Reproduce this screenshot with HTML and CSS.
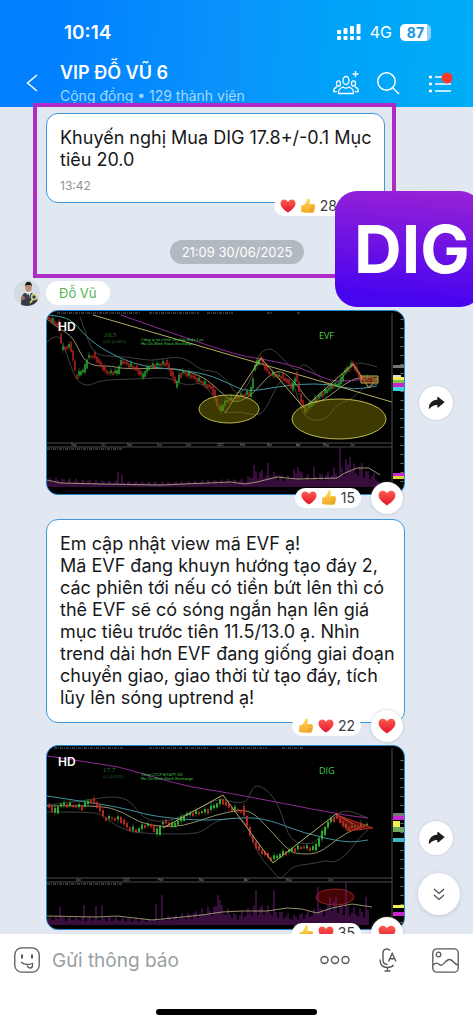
FILE: index.html
```html
<!DOCTYPE html>
<html lang="vi">
<head>
    <meta charset="UTF-8">
    <meta name="viewport" content="width=device-width, initial-scale=1.0">
    <title>VIP ĐỖ VŨ 6</title>
    <link rel="stylesheet" href="styles.css">
</head>
<body>
    <!-- shared icons -->
    <svg class="sprite" aria-hidden="true">
        <defs>
            <linearGradient id="heart-fill" x1="0" y1="0" x2="0" y2="1">
                <stop offset="0" stop-color="#ff5b4f"/>
                <stop offset="1" stop-color="#e0142b"/>
            </linearGradient>
            <linearGradient id="thumb-fill" x1="0" y1="0" x2="0" y2="1">
                <stop offset="0" stop-color="#ffdc55"/>
                <stop offset="1" stop-color="#f3a827"/>
            </linearGradient>
            <symbol id="heart" viewBox="0 0 16 16">
                <path fill="url(#heart-fill)" d="M8 14.6C5.4 12.7.5 9.4.5 5.5.5 3.2 2.2 1.6 4.3 1.6 6 1.6 7.3 2.5 8 4c.7-1.5 2-2.4 3.7-2.4 2.1 0 3.8 1.6 3.8 3.9 0 3.9-4.9 7.2-7.5 9.1z"/>
            </symbol>
            <symbol id="thumb" viewBox="0 0 16 16">
                <path fill="url(#thumb-fill)" d="M1.2 7.6c1.6-.2 3-.6 4-2.1C6.300 3.800 7.200 2.800 7.200 1.500 7.300.2 9.300 0 9.800 1.600c.4 1.400 0 2.800-.6 4.300h4.500c1.500 0 1.800 1.800.8 2.300 1.100.5.9 2.100-.1 2.400.7.6.4 2-.5 2.200.4.900-.2 2-1.200 2H6.500c-1.600 0-2.600-.5-3.500-.5H1.200z"/>
                <path fill="none" stroke="#d98a1c" stroke-width=".6" d="M10.200 8.300h4M10.200 10.600h3.900M10.200 12.800h3.400"/>
            </symbol>
            <symbol id="share" viewBox="0 0 16 16">
                <path fill="#1c1c1e" stroke="#1c1c1e" stroke-linejoin="round" d="M9.300 3.200 15 7.600l-5.700 4.600V9.800C5.700 9.500 3.300 10.800 1.200 13.400 1.500 8.800 4.400 5.900 9.300 5.600z"/>
            </symbol>
        </defs>
    </svg>

    <header class="header">
        <div class="status-bar">
            <span class="time">10:14</span>
            <div class="status-right">
                <svg width="25" height="17" viewBox="0 0 25 17" fill="#fff">
                    <rect x="0" y="6" width="4" height="4" rx="1"/><rect x="0" y="12" width="4" height="4" rx="1"/>
                    <rect x="6.500" y="4" width="4" height="6" rx="1"/><rect x="6.500" y="12" width="4" height="4" rx="1"/>
                    <rect x="13" y="2" width="4" height="8" rx="1"/><rect x="13" y="12" width="4" height="4" rx="1"/>
                    <rect x="19.500" y="0" width="4" height="10" rx="1"/><rect x="19.500" y="12" width="4" height="4" rx="1"/>
                </svg>
                <span class="network">4G</span>
                <span class="battery">87</span>
            </div>
        </div>
        <div class="title-bar">
            <button class="icon-btn back" aria-label="Quay lại">
                <svg width="12" height="18" viewBox="0 0 12 18" fill="none" stroke="#fff" stroke-width="1.5"><path d="M11 1 1.500 9 11 17"/></svg>
            </button>
            <div class="titles">
                <h1>VIP ĐỖ VŨ 6</h1>
                <p>Cộng đồng • 129 thành viên</p>
            </div>
            <div class="actions">
                <button class="icon-btn" aria-label="Thêm thành viên">
                    <svg width="26" height="24" viewBox="0 0 26 24" fill="none" stroke="#fff" stroke-width="1.3">
                        <ellipse cx="13" cy="9.5" rx="3" ry="4"/>
                        <ellipse cx="5.5" cy="12.5" rx="2" ry="2.7"/>
                        <ellipse cx="20.5" cy="12.5" rx="2" ry="2.7"/>
                        <path d="M5.5 22.500c-.4-4 1.500-5.500 4.500-6.500 2 1.400 4 1.400 6 0 3 1 4.900 2.500 4.500 6.500z"/>
                        <path d="M4 16c-2.500.6-3.300 2-3.300 4.700H4M22 16c2.500.6 3.300 2 3.300 4.700H22M22.500 0v6M19.500 3h6"/>
                    </svg>
                </button>
                <button class="icon-btn" aria-label="Tìm kiếm">
                    <svg width="23" height="23" viewBox="0 0 23 23" fill="none" stroke="#fff" stroke-width="1.5"><circle cx="9.5" cy="9.5" r="8.7"/><path d="m16 16 6 6"/></svg>
                </button>
                <button class="icon-btn menu" aria-label="Tùy chọn">
                    <svg width="25" height="22" viewBox="0 0 25 22" fill="none" stroke="#fff" stroke-width="1.5">
                        <path d="M1 5h3M1 12h3M1 19h3" stroke-width="2.5"/><path d="M7 5h11M7 12h16M7 19h16"/>
                        <circle cx="19" cy="6" r="5.5" fill="#f9382d" stroke="none"/>
                    </svg>
                </button>
            </div>
        </div>
    </header>

    <main class="chat">
        <section class="highlighted">
            <div class="bubble first">
                <p>Khuyến nghị Mua DIG 17.8+/-0.1 Mục<br>tiêu 20.0</p>
                <time>13:42</time>
                <div class="reactions">
                    <span class="pill">
                        <svg width="16" height="16"><use href="#heart"/></svg>
                        <svg width="16" height="16"><use href="#thumb"/></svg>
                        <span>28</span>
                    </span>
                </div>
            </div>
            <div class="date"><span>21:09 30/06/2025</span></div>
        </section>

        <div class="sender">
            <svg class="avatar" width="26" height="26" viewBox="0 0 26 26">
                <defs><clipPath id="round"><circle cx="13" cy="13" r="13"/></clipPath></defs>
                <g clip-path="url(#round)">
                    <path fill="#d5dce1" d="M0 0h26v26H0z"/>
                    <path fill="#363c45" d="M7 26c0-8 1-12 4-13l6 0c4 1 7 5 8 13z"/>
                    <path fill="#eee" d="m12 12 2.500 8L17 12z"/>
                    <path fill="#233a68" d="m14 13-1 3 1.500 5 1-5z"/>
                    <ellipse cx="14.5" cy="7.5" rx="3.2" ry="4.3" fill="#bd8b72"/>
                    <path fill="#17191d" d="M11 7c-.6-7 7.500-7 7 0l-1-2h-5z"/>
                    <path fill="none" stroke="#dbd383" stroke-width="1.5" d="m16 23 3-4"/>
                    <circle cx="20" cy="17" r="2.5" fill="none" stroke="#dbd383" stroke-width="1.5"/>
                    <circle cx="9" cy="18" r="2" fill="#9b705f"/>
                </g>
            </svg>
            <span class="name">Đỗ Vũ</span>
        </div>

        <div class="row">
            <figure class="photo">
                <svg class="chart" viewBox="0 0 357 183" data-chart="evf">
                    <path class="strip" d="M10 2h84M102 2h50M160 2h26M220 2h5M250 2h4"/>
                    <g class="indicators"></g>
                    <path class="yellow" d="m46 4 299 87"/>
                    <g class="candles"></g>
                    <path class="yellow" d="m178 102 36-55 43 50 49-44 16 24 8-10"/>
                    <path class="bright" d="M314 65h17v7h-17z" fill="#aa422080"/>
                    <ellipse class="zone" cx="182" cy="98" rx="30" ry="14"/>
                    <ellipse class="zone" cx="292" cy="108" rx="47" ry="20"/>
                    <path class="axis" d="M0 132h345M0 136h345M345 2v181"/>
                    <path class="strip" d="M0 138h76"/>
                    <g class="volume"></g>
                    <path class="cream" d="m0 169 14 3 40 1 60 1 70-3 14 2 12-2 20-5 20 2 40-1 8-5 12-5h12l11 7"/>
                    <g class="axis-text">
                        <text x="24" y="135">Sep</text><text x="54" y="135">Oct</text><text x="80" y="135">Nov</text><text x="110" y="135">Dec</text><text x="139" y="135">Dec</text><text x="170" y="135">2025</text><text x="193" y="135">Feb</text><text x="220" y="135">Mar</text><text x="249" y="135">Apr</text><text x="276" y="135">May</text><text x="303" y="135">Jun</text>
                    </g>
                    <path class="ticks" d="M355 8v172"/>
                    <path fill="#777" d="M346 54h11v3h-11z"/><path fill="#ddd" d="M346 64h8v2h-8z"/><path fill="#f1ef52" d="M346 66h11v3h-11z"/><path fill="#7fc04f" d="M346 69h11v3h-11z"/><path fill="#c927cb" d="M346 72h11v4h-11zM346 162h11v3h-11z"/><path fill="#3bd4df" d="M346 76h11v4h-11z"/><path fill="#e1d13a" d="M346 165h11v3h-11z"/>
                    <text class="price" x="57" y="26">10.5</text>
                    <text class="tiny dim" x="56" y="32">0.05 (0.48%)</text>
                    <text class="tiny" x="94" y="30">Công ty tài chính cổ phần Điện Lực</text>
                    <text class="tiny" x="94" y="34">Ho Chi Minh Stock Exchange</text>
                    <text class="ticker" x="272" y="28">EVF</text>
                    <text class="hd" x="11" y="20">HD</text>
                </svg>
                <div class="reactions">
                    <span class="pill">
                        <svg width="16" height="16"><use href="#heart"/></svg>
                        <svg width="16" height="16"><use href="#thumb"/></svg>
                        <span>15</span>
                    </span>
                    <button class="react" aria-label="Thả tim"><svg width="18" height="18"><use href="#heart"/></svg></button>
                </div>
            </figure>
            <button class="round-btn" aria-label="Chia sẻ"><svg width="17" height="17"><use href="#share"/></svg></button>
        </div>

        <div class="row">
            <div class="bubble">
                <p>Em cập nhật view mã EVF ạ!<br>Mã EVF đang khuyn hướng tạo đáy 2,<br>các phiên tới nếu có tiền bứt lên thì có<br>thê EVF sẽ có sóng ngắn hạn lên giá<br>mục tiêu trước tiên 11.5/13.0 ạ. Nhìn<br>trend dài hơn EVF đang giống giai đoạn<br>chuyển giao, giao thời từ tạo đáy, tích<br>lũy lên sóng uptrend ạ!</p>
                <div class="reactions">
                    <span class="pill">
                        <svg width="16" height="16"><use href="#thumb"/></svg>
                        <svg width="16" height="16"><use href="#heart"/></svg>
                        <span>22</span>
                    </span>
                    <button class="react" aria-label="Thả tim"><svg width="18" height="18"><use href="#heart"/></svg></button>
                </div>
            </div>
        </div>

        <div class="row">
            <figure class="photo">
                <svg class="chart" viewBox="0 0 357 183" data-chart="dig">
                    <path class="strip" d="M7 2h70M102 2h34M138 2h24M170 2h50M235 2h22"/>
                    <g class="indicators"></g>
                    <g class="candles"></g>
                    <path class="yellow" d="m116 82 60-33 50 68 63-49 17 10"/>
                    <path fill="#bf171790" stroke="#a93022" d="m290 69 36 13-25 3z"/>
                    <ellipse class="danger" cx="288" cy="151" rx="19" ry="8"/>
                    <path class="axis" d="M0 132h345M0 136h345M345 2v181"/>
                    <path class="strip" d="M0 138h76"/>
                    <g class="volume"></g>
                    <path class="cream" d="m0 170 50 1 20-1 35 4 50-5 20-3 20-1 25 0 20-3 15 1 15 4 15-5 20-4 20 3"/>
                    <g class="axis-text">
                        <text x="29" y="135">Dec</text><text x="76" y="135">2025</text><text x="111" y="135">Feb</text><text x="152" y="135">Mar</text><text x="197" y="135">Apr</text><text x="239" y="135">May</text><text x="281" y="135">Jun</text>
                    </g>
                    <path class="ticks" d="M355 14v166"/>
                    <path fill="#777" d="M346 67h11v3h-11z"/><path fill="#c927cb" d="M346 70h11v4h-11zM346 166h11v4h-11z"/><path fill="#f1ef52" d="M346 75h7v6h-7zM346 159h11v3h-11z"/><path fill="#6da75b" d="M346 81h11v5h-11z"/><path fill="#39bac6" d="M346 92h11v4h-11z"/>
                    <text class="price" x="56" y="26">17.7</text>
                    <text class="tiny dim" x="56" y="32">0.1 (0.57%)</text>
                    <text class="tiny" x="94" y="30">Tổng CTCP ĐT&amp;PT XD</text>
                    <text class="tiny" x="94" y="34">Ho Chi Minh Stock Exchange</text>
                    <text class="ticker" x="272" y="28">DIG</text>
                    <text class="hd" x="11" y="20">HD</text>
                </svg>
                <div class="reactions">
                    <span class="pill">
                        <svg width="16" height="16"><use href="#thumb"/></svg>
                        <svg width="16" height="16"><use href="#heart"/></svg>
                        <span>35</span>
                    </span>
                    <button class="react" aria-label="Thả tim"><svg width="18" height="18"><use href="#heart"/></svg></button>
                </div>
            </figure>
            <button class="round-btn" aria-label="Chia sẻ"><svg width="17" height="17"><use href="#share"/></svg></button>
        </div>

        <button class="scroll-down" aria-label="Xuống cuối">
            <svg width="12" height="13" viewBox="0 0 12 13" fill="none" stroke="#4d4d4d" stroke-width="1.2"><path d="m1 1 5 4.500L11 1M1 7l5 4.500L11 7"/></svg>
        </button>
    </main>

    <footer class="composer">
        <div class="input-row">
            <button class="icon-btn" aria-label="Nhãn dán">
                <svg width="26" height="26" viewBox="0 0 26 26" fill="none" stroke="#55585c" stroke-width="1.3">
                    <rect x=".8" y=".8" width="24.4" height="24.4" rx="7"/>
                    <path d="M8 7.500v4M18 7.500v4" stroke-width="2"/>
                    <path d="M7 15c3 3 7 3 11.500 1.500v2.500c-.6 3-5 2.500-5-.8"/>
                </svg>
            </button>
            <input type="text" placeholder="Gửi thông báo" aria-label="Gửi thông báo">
            <button class="icon-btn" aria-label="Thêm">
                <svg width="30" height="10" viewBox="0 0 30 10" fill="none" stroke="#55585c" stroke-width="1.4"><circle cx="4.5" cy="5" r="3.5"/><circle cx="15" cy="5" r="3.5"/><circle cx="25.5" cy="5" r="3.5"/></svg>
            </button>
            <button class="icon-btn mic" aria-label="Giọng nói">
                <svg width="18" height="24" viewBox="0 0 18 24" fill="none" stroke="#55585c" stroke-width="1.4">
                    <path d="M11 2.500C9-.1 4 .6 4 5v7c0 3 2 4.500 4.500 4.500"/>
                    <path d="M1 11.500c0 5.500 3 8 7.500 8 2.500 0 4.700-.8 6-2.500M8.500 19.500V23M5.500 23h6M9.500 13.500l3.700-8 3.800 8M11 10.800h4.500"/>
                </svg>
            </button>
            <button class="icon-btn" aria-label="Hình ảnh">
                <svg width="27" height="25" viewBox="0 0 27 25" fill="none" stroke="#55585c" stroke-width="1.3">
                    <rect x=".8" y=".8" width="25.4" height="23.4" rx="4"/><circle cx="6.5" cy="6.5" r="2.3"/>
                    <path d="M1 17c4-3.500 5-1.500 7 0 3 2 5-5 9-5.500 4.500-.5 5 5.500 9 5.500"/>
                </svg>
            </button>
        </div>
        <div class="home-indicator"></div>
    </footer>

    <!-- call-out drawn over the chat -->
    <div class="frame"></div>
    <div class="badge">DIG</div>

    <script src="chart.js"></script>
</body>
</html>
```
FILE: styles.css
```css
* {
    margin: 0;
    padding: 0;
    box-sizing: border-box;
}

body {
    position: relative;
    display: flex;
    flex-direction: column;
    height: 100vh;
    overflow: hidden;
    font-family: Inter, 'Liberation Sans', sans-serif;
    color: #17181a;
    background: #fff;
}

button {
    border: none;
    background: none;
    font: inherit;
}

svg {
    display: block;
    flex-shrink: 0;
}

.sprite {
    position: absolute;
    width: 0;
    height: 0;
}

/* header */
.header {
    flex-shrink: 0;
    height: 107px;
    padding-top: 20px;
    background: linear-gradient(95deg, #007fff 10%, #0a94fb 50%, #00a2f8 70%, #00adf6 100%);
    color: #fff;
}

.status-bar {
    display: flex;
    align-items: center;
    justify-content: space-between;
    height: 24px;
    padding: 0 42px 0 64px;
}

.time {
    font-size: 19px;
    font-weight: 600;
}

.status-right {
    display: flex;
    align-items: center;
    gap: 8px;
}

.network {
    font-size: 16px;
}

.battery {
    width: 31px;
    height: 17px;
    border-radius: 5px;
    background: linear-gradient(90deg, #fff 87%, #8fd1fb 87%);
    color: #1695e6;
    font-size: 14px;
    font-weight: 700;
    line-height: 17px;
    text-align: center;
}

.title-bar {
    display: flex;
    align-items: center;
    padding: 16px 20px 0 26px;
}

.icon-btn {
    display: flex;
    flex-shrink: 0;
}

.back {
    width: 34px;
}

.titles {
    flex: 1;
}

.titles h1 {
    font-size: 18px;
    font-weight: 600;
    line-height: 26px;
}

.titles p {
    color: #a3d8ff;
    font-size: 14px;
    line-height: 20px;
}

.actions {
    display: flex;
    align-items: center;
    gap: 18px;
}

.menu {
    margin-left: 10px;
}

/* chat */
.chat {
    position: relative;
    flex: 1;
    min-height: 0;
    overflow: hidden;
    padding: 6px 17px 0 14px;
    background: #e2e8f2;
}

.highlighted {
    padding-left: 32px;
}

.bubble {
    position: relative;
    flex: 1;
    min-width: 0;
    padding: 13px;
    border: 1px solid #3f98db;
    border-radius: 12px;
    background: #fff;
    font-size: 18px;
    line-height: 22px;
}

.bubble p {
    white-space: nowrap;
}

.first {
    margin-right: 71px;
    padding-bottom: 5px;
}

.bubble time {
    display: block;
    margin-top: 4px;
    color: #929496;
    font-size: 12px;
}

.reactions {
    position: absolute;
    right: 1px;
    bottom: -20px;
    display: flex;
    align-items: center;
    gap: 10px;
    height: 32px;
}

.first .reactions {
    right: 41px;
}

.pill {
    display: flex;
    align-items: center;
    gap: 4px;
    height: 20px;
    padding: 0 6px;
    border-radius: 10px;
    background: #fff;
    color: #3a3b3d;
    font-size: 14px;
    line-height: 20px;
}

.react {
    display: flex;
    align-items: center;
    justify-content: center;
    width: 32px;
    height: 32px;
    border-radius: 50%;
    background: #fff;
    box-shadow: 0 0 3px #8a94a080;
}

.date {
    display: flex;
    justify-content: center;
    margin: 37px 28px 16px 0;
}

.date span {
    padding: 0 12px;
    border-radius: 12px;
    background: #b2b9c0;
    color: #fff;
    font-size: 13px;
    line-height: 24px;
}

.sender {
    display: flex;
    align-items: center;
    gap: 6px;
    margin-bottom: 4px;
}

.name {
    padding: 0 13px;
    border-radius: 12px;
    background: #fff;
    color: #51b44e;
    font-size: 13px;
    line-height: 24px;
}

.row {
    display: flex;
    align-items: center;
    gap: 14px;
    margin: 0 0 24px 32px;
}

.row .bubble {
    margin-right: 51px;
    margin-bottom: -2px;
}

.photo {
    position: relative;
    flex: 1;
    border: 1px solid #2687ce;
    border-radius: 12px;
    background: #000;
}

.round-btn {
    display: flex;
    flex-shrink: 0;
    align-items: center;
    justify-content: center;
    width: 34px;
    height: 34px;
    margin-right: 3px;
    border-radius: 50%;
    background: #fff;
    box-shadow: 0 0 2px #8a94a080;
}

.scroll-down {
    position: absolute;
    right: 13px;
    bottom: 19px;
    display: flex;
    align-items: center;
    justify-content: center;
    width: 42px;
    height: 42px;
    border-radius: 50%;
    background: #fff;
    box-shadow: 0 1px 4px #8a94a060;
}

/* charts */
.chart {
    width: 100%;
    border-radius: 11px;
    fill: none;
}

.chart text {
    fill: #43cf4c;
    font-family: 'Liberation Sans', sans-serif;
}

.chart .hd {
    fill: #fff;
    font-family: Inter, sans-serif;
    font-size: 12px;
    font-weight: 600;
}

.chart .ticker {
    font-family: 'Open Sans', sans-serif;
    font-size: 9px;
}

.chart .price {
    fill: #2c8036;
    font-family: 'Liberation Serif', serif;
    font-size: 7px;
    font-style: italic;
}

.chart .tiny {
    font-size: 4px;
}

.chart .dim {
    fill: #2c6b32;
}

.chart .axis-text text {
    fill: #999;
    font-size: 3px;
}

.strip {
    stroke: #686868;
    stroke-dasharray: 3 1 1 1;
}

.gray {
    stroke: #4c514e;
    stroke-width: 0.8;
}

.cream {
    stroke: #b9b582;
    stroke-width: 0.8;
}

.cyan {
    stroke: #3e949e;
}

.purple {
    stroke: #8e2c94;
}

.yellow {
    stroke: #b5aa62;
}

.bright {
    stroke: #bcab48;
}

.zone {
    fill: #77730080;
    stroke: #bab550;
}

.danger {
    fill: #8b080880;
    stroke: #8f2222;
}

.axis {
    stroke: #4d4d4d;
}

.ticks {
    stroke: #777;
    stroke-width: 3;
    stroke-dasharray: 1 8;
}

.up {
    stroke: #32bd37;
}

.down {
    stroke: #c52b25;
}

.volume path {
    stroke: #6e1c77;
}

/* composer */
.composer {
    flex-shrink: 0;
    padding: 13px 14px 9px;
    background: #fff;
}

.input-row {
    display: flex;
    align-items: center;
    height: 26px;
    margin-bottom: 36px;
}

.input-row input {
    flex: 1;
    min-width: 0;
    padding: 0 12px;
    border: none;
    outline: none;
    font: 19px Inter, sans-serif;
}

.input-row input::placeholder {
    color: #9a9fa3;
}

.mic {
    margin: 0 35px 0 29px;
}

.home-indicator {
    width: 36%;
    height: 6px;
    margin: 0 auto;
    border-radius: 3px;
    background: #000;
}

/* call-out */
.frame {
    position: absolute;
    top: 103px;
    left: 33px;
    right: 77px;
    height: 175px;
    border: 4px solid #ad2cc6;
}

.badge {
    position: absolute;
    top: 191px;
    right: -9px;
    width: 147px;
    height: 116px;
    padding-left: 19px;
    border-radius: 22px;
    background: linear-gradient(185deg, #9a22d5, #4704ef 90%);
    color: #fff;
    font-size: 66px;
    font-weight: 700;
    line-height: 116px;
}
```
FILE: chart.js
```js
// all series are [x, y] turning points, volume is [x, bar height]
const CHARTS = {
    evf: {
        step: 2,
        base: 176,
        price: [[2, 7], [12, 15], [16, 38], [24, 35], [30, 65], [38, 58], [42, 46], [48, 45], [55, 55], [61, 62], [71, 61], [75, 50], [90, 58], [96, 65], [103, 55], [120, 52], [130, 73], [135, 61], [145, 65], [166, 78], [173, 100], [180, 90], [205, 81], [208, 56], [214, 48], [223, 63], [236, 66], [246, 76], [250, 65], [253, 83], [258, 100], [273, 85], [286, 75], [293, 73], [298, 61], [306, 53], [315, 68], [331, 70]],
        volume: [[1, 9], [60, 6], [120, 5], [200, 8], [206, 18], [225, 15], [240, 10], [250, 18], [260, 12], [280, 14], [295, 22], [306, 22], [330, 12]],
        spikes: { 71: 15, 75: 12, 207: 22, 221: 24, 251: 20, 267: 20, 293: 40, 299: 28, 303: 30, 315: 24 },
        lines: [
            ['gray', [[33, 6], [38, 20], [45, 40], [55, 45], [83, 46], [103, 50], [120, 47], [136, 46], [146, 53], [156, 60], [170, 60], [183, 73], [190, 85], [203, 73], [211, 43], [223, 36], [233, 45], [250, 62], [256, 51], [270, 63], [280, 75], [293, 71], [306, 51], [320, 53], [330, 56]]],
            ['gray', [[0, 31], [11, 20], [20, 43], [28, 68], [40, 76], [53, 69], [90, 68], [120, 66], [130, 71], [143, 75], [153, 71], [166, 83], [176, 103], [193, 100], [213, 106], [223, 90], [233, 68], [246, 68], [255, 103], [266, 110], [280, 108], [290, 93], [306, 88], [316, 76], [331, 73]]],
            ['cream', [[0, 8], [13, 18], [26, 26], [36, 48], [46, 55], [66, 55], [76, 58], [126, 57], [143, 61], [160, 68], [183, 90], [193, 91], [206, 83], [220, 66], [233, 58], [250, 73], [263, 93], [276, 90], [300, 71], [316, 65], [330, 68]]],
            ['cyan', [[0, 4], [13, 5], [26, 10], [43, 30], [73, 48], [100, 56], [126, 58], [160, 63], [183, 73], [200, 81], [230, 76], [253, 73], [283, 73], [306, 79], [330, 75]]],
            ['purple', [[74, 4], [183, 43], [216, 48], [253, 56], [283, 70], [300, 70], [320, 68]]]
        ]
    },
    dig: {
        step: 3,
        base: 179,
        price: [[2, 60], [9, 66], [15, 58], [35, 61], [45, 54], [52, 60], [58, 72], [74, 73], [82, 82], [90, 85], [99, 79], [106, 80], [111, 88], [117, 75], [126, 80], [140, 69], [160, 65], [176, 55], [184, 62], [198, 66], [204, 90], [212, 103], [225, 113], [240, 106], [255, 101], [268, 103], [275, 90], [283, 75], [290, 71], [300, 82], [322, 78]],
        volume: [[1, 8], [60, 8], [100, 6], [140, 11], [172, 20], [190, 10], [210, 20], [225, 17], [245, 9], [268, 15], [290, 22], [310, 15], [323, 15]],
        spikes: { 13: 18, 37: 20, 49: 19, 55: 20, 109: 21, 115: 30, 171: 30, 173: 25, 209: 35, 227: 35, 271: 38, 283: 28, 289: 28, 299: 42, 319: 28 },
        lines: [
            ['gray', [[0, 59], [43, 54], [58, 51], [75, 51], [85, 57], [96, 72], [110, 76], [126, 74], [153, 62], [173, 52], [183, 56], [200, 57], [205, 42], [211, 39], [223, 46], [233, 62], [243, 96], [266, 99], [276, 87], [290, 67], [301, 64], [321, 72]]],
            ['gray', [[0, 66], [46, 66], [56, 69], [70, 81], [90, 87], [116, 88], [150, 88], [160, 82], [171, 74], [193, 71], [201, 81], [210, 107], [223, 122], [231, 132], [236, 132], [245, 120], [270, 117], [280, 114], [286, 117], [300, 109], [310, 94], [321, 84]]],
            ['cream', [[0, 60], [53, 59], [76, 66], [93, 77], [116, 81], [136, 80], [160, 72], [180, 66], [203, 63], [223, 84], [243, 106], [253, 108], [270, 108], [283, 99], [300, 86], [320, 79]]],
            ['cyan', [[0, 50], [60, 59], [83, 64], [110, 71], [160, 75], [200, 71], [223, 74], [256, 87], [300, 97], [321, 94]]],
            ['purple', [[0, 10], [60, 19], [76, 22], [110, 32], [143, 41], [183, 47], [290, 68], [321, 72]]]
        ]
    }
};

// linear value between turning points
function valueAt(points, x) {
    const next = points.findIndex(p => p[0] >= x);
    if (next <= 0) return points[0][1];
    const [x1, y1] = points[next - 1];
    const [x2, y2] = points[next];
    return y1 + (y2 - y1) * (x - x1) / (x2 - x1);
}

// smooth curve through the middles of the segments
function curve(name, points) {
    let d = `M${points[0]}`;
    for (let i = 1; i < points.length - 1; i++) {
        const [x, y] = points[i];
        const [nx, ny] = points[i + 1];
        d += `Q${x} ${y} ${(x + nx) / 2} ${(y + ny) / 2}`;
    }
    d += `L${points[points.length - 1]}`;
    return `<path class="${name}" d="${d}"/>`;
}

function bar(x, y1, y2, width, name) {
    return `<path class="${name}" stroke-width="${width}" d="M${x} ${y1.toFixed(1)}V${y2.toFixed(1)}"/>`;
}

function drawChart(svg) {
    const data = CHARTS[svg.dataset.chart];
    const end = data.price[data.price.length - 1][0];
    let candles = '';
    let bars = '';

    for (let x = 2, i = 0; x <= end; x += data.step, i++) {
        const y = valueAt(data.price, x);
        const slope = valueAt(data.price, Math.min(x + data.step, end)) - y;
        const wobble = Math.sin(i * 2.4) * 2;
        const body = Math.min(5, Math.abs(slope) / 2 + 0.5 + Math.abs(wobble) / 2);
        const name = slope + wobble > -0.2 ? 'down' : 'up';
        candles += bar(x, y - body - 2 + wobble, y + body + 2, 0.4, name);
        candles += bar(x, y - body + wobble / 2, y + body + wobble / 2, data.step * 0.6, name);
    }

    for (let x = 1, i = 0; x <= end; x += 2, i++) {
        const height = data.spikes[x] || valueAt(data.volume, x) * (0.8 + 0.3 * Math.sin(i * 1.9));
        bars += bar(x, data.base, data.base - height, 1, 'volume-bar');
    }

    svg.querySelector('.indicators').innerHTML = data.lines.map(([name, points]) => curve(name, points)).join('');
    svg.querySelector('.candles').innerHTML = candles;
    svg.querySelector('.volume').innerHTML = bars;
}

document.querySelectorAll('.chart').forEach(drawChart);
```
